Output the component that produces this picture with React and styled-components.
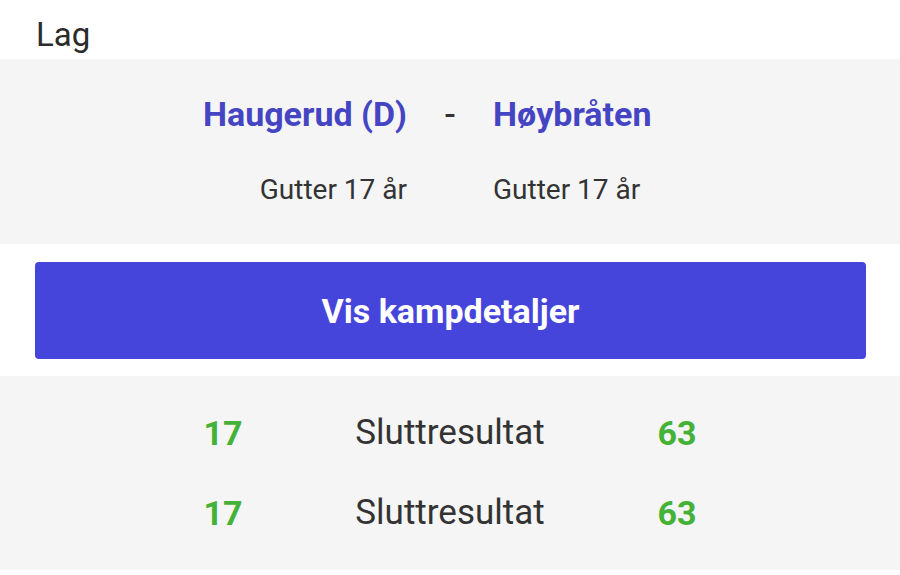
import React from 'react';
import styled, { createGlobalStyle } from 'styled-components';

const GlobalStyle = createGlobalStyle`
    html, body { margin: 0; padding: 0; background: #ffffff; }
    body { font-family: Roboto, "Liberation Sans", Arial, sans-serif; color: #333333; }
`;

const matches = [
    { home: 17, away: 63, label: 'Sluttresultat' },
    { home: 17, away: 63, label: 'Sluttresultat' },
];

const App = () => (
    <>
        <GlobalStyle />
        <Page>
            <Heading>Lag</Heading>

            {/* ── lag-panel ── */}
            <TeamPanel>
                <TeamGrid>
                    <TeamName $align="right">Haugerud (D)</TeamName>
                    <Dash>-</Dash>
                    <TeamName $align="left">Høybråten</TeamName>
                </TeamGrid>
                <TeamGrid>
                    <ClassName $align="right">Gutter 17 år</ClassName>
                    <span />
                    <ClassName $align="left">Gutter 17 år</ClassName>
                </TeamGrid>
            </TeamPanel>

            <ButtonWrap>
                <DetailsBtn>Vis kampdetaljer</DetailsBtn>
            </ButtonWrap>

            {/* ── resultater ── */}
            <ResultPanel>
                {matches.map((m, i) => (
                    <ResultRow key={i}>
                        <Score>{m.home}</Score>
                        <ResultLabel>{m.label}</ResultLabel>
                        <Score>{m.away}</Score>
                    </ResultRow>
                ))}
            </ResultPanel>
        </Page>
    </>
);

export default App;

// ── Styled Components ──────────────────────────────────────────────────────────

const Page = styled.div`
    width: 900px;
    display: flex; flex-direction: column;
`;

const Heading = styled.div`
    height: 59px; box-sizing: border-box;
    padding: 11px 0 0 36px;
    font-size: 33px; line-height: 48px;
    color: #2b2b2b;
`;

const TeamPanel = styled.div`
    background: #f5f5f5;
    height: 185px; box-sizing: border-box;
    padding-top: 35px;
    display: flex; flex-direction: column; gap: 36px;
`;

const TeamGrid = styled.div`
    display: grid;
    grid-template-columns: 1fr 86px 1fr;
    align-items: center;
`;

const TeamName = styled.div`
    text-align: ${({ $align }) => $align};
    font-size: 34px; font-weight: 700; line-height: 40px;
    color: #4545c4;
`;

const Dash = styled.div`
    text-align: center;
    font-size: 34px; font-weight: 500; line-height: 40px;
    color: #333333;
`;

const ClassName = styled.div`
    text-align: ${({ $align }) => $align};
    font-size: 28px; line-height: 40px;
    color: #333333;
`;

const ButtonWrap = styled.div`
    padding: 18px 34px 17px 35px;
    background: #ffffff;
`;

const DetailsBtn = styled.button`
    display: block; width: 100%; height: 97px;
    background: #4545dc; color: #ffffff;
    border: none; border-radius: 4px;
    font-family: Roboto, "Liberation Sans", Arial, sans-serif;
    font-size: 34px; font-weight: 700;
    cursor: pointer;
`;

const ResultPanel = styled.div`
    background: #f5f5f5;
    padding: 17px 0 17px;
`;

const ResultRow = styled.div`
    display: grid;
    grid-template-columns: repeat(3, 227px);
    justify-content: center;
    line-height: 80px;
    text-align: center;
`;

const Score = styled.div`
    font-size: 34px; font-weight: 700;
    color: #44b236;
`;

const ResultLabel = styled.div`
    font-size: 35px;
    color: #333333;
`;
